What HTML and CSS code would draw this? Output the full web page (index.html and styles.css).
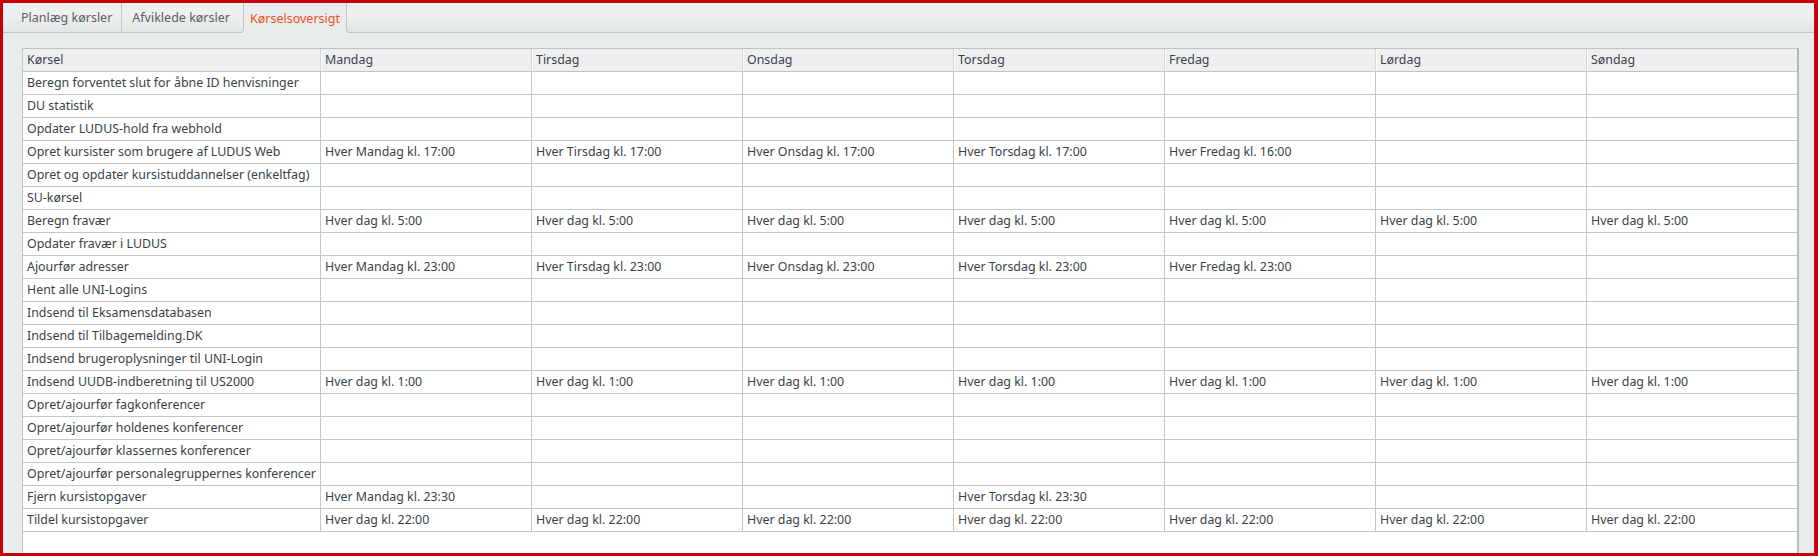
FILE: index.html
```html
<!DOCTYPE html>
<html lang="da">
<head>
<meta charset="utf-8">
<title>Kørselsoversigt</title>
<link rel="stylesheet" href="styles.css">
</head>
<body>
<div class="frame">
  <div class="tabs">
    <div class="tab tab-first">Planlæg kørsler</div>
    <div class="tab tab-before-active">Afviklede kørsler</div>
    <div class="tab tab-active">Kørselsoversigt</div>
    <div class="tab-filler"></div>
  </div>
  <div class="panel">
    <div class="grid">
      <table class="schedule">
        <colgroup>
          <col class="c-name">
          <col class="c-day"><col class="c-day"><col class="c-day"><col class="c-day"><col class="c-day"><col class="c-day">
          <col class="c-last">
        </colgroup>
        <thead>
          <tr><th>Kørsel</th><th>Mandag</th><th>Tirsdag</th><th>Onsdag</th><th>Torsdag</th><th>Fredag</th><th>Lørdag</th><th>Søndag</th></tr>
        </thead>
        <tbody>
          <tr><td>Beregn forventet slut for åbne ID henvisninger</td><td></td><td></td><td></td><td></td><td></td><td></td><td></td></tr>
          <tr><td>DU statistik</td><td></td><td></td><td></td><td></td><td></td><td></td><td></td></tr>
          <tr><td>Opdater LUDUS-hold fra webhold</td><td></td><td></td><td></td><td></td><td></td><td></td><td></td></tr>
          <tr><td>Opret kursister som brugere af LUDUS Web</td><td>Hver Mandag kl. 17:00</td><td>Hver Tirsdag kl. 17:00</td><td>Hver Onsdag kl. 17:00</td><td>Hver Torsdag kl. 17:00</td><td>Hver Fredag kl. 16:00</td><td></td><td></td></tr>
          <tr><td>Opret og opdater kursistuddannelser (enkeltfag)</td><td></td><td></td><td></td><td></td><td></td><td></td><td></td></tr>
          <tr><td>SU-kørsel</td><td></td><td></td><td></td><td></td><td></td><td></td><td></td></tr>
          <tr><td>Beregn fravær</td><td>Hver dag kl. 5:00</td><td>Hver dag kl. 5:00</td><td>Hver dag kl. 5:00</td><td>Hver dag kl. 5:00</td><td>Hver dag kl. 5:00</td><td>Hver dag kl. 5:00</td><td>Hver dag kl. 5:00</td></tr>
          <tr><td>Opdater fravær i LUDUS</td><td></td><td></td><td></td><td></td><td></td><td></td><td></td></tr>
          <tr><td>Ajourfør adresser</td><td>Hver Mandag kl. 23:00</td><td>Hver Tirsdag kl. 23:00</td><td>Hver Onsdag kl. 23:00</td><td>Hver Torsdag kl. 23:00</td><td>Hver Fredag kl. 23:00</td><td></td><td></td></tr>
          <tr><td>Hent alle UNI-Logins</td><td></td><td></td><td></td><td></td><td></td><td></td><td></td></tr>
          <tr><td>Indsend til Eksamensdatabasen</td><td></td><td></td><td></td><td></td><td></td><td></td><td></td></tr>
          <tr><td>Indsend til Tilbagemelding.DK</td><td></td><td></td><td></td><td></td><td></td><td></td><td></td></tr>
          <tr><td>Indsend brugeroplysninger til UNI-Login</td><td></td><td></td><td></td><td></td><td></td><td></td><td></td></tr>
          <tr><td>Indsend UUDB-indberetning til US2000</td><td>Hver dag kl. 1:00</td><td>Hver dag kl. 1:00</td><td>Hver dag kl. 1:00</td><td>Hver dag kl. 1:00</td><td>Hver dag kl. 1:00</td><td>Hver dag kl. 1:00</td><td>Hver dag kl. 1:00</td></tr>
          <tr><td>Opret/ajourfør fagkonferencer</td><td></td><td></td><td></td><td></td><td></td><td></td><td></td></tr>
          <tr><td>Opret/ajourfør holdenes konferencer</td><td></td><td></td><td></td><td></td><td></td><td></td><td></td></tr>
          <tr><td>Opret/ajourfør klassernes konferencer</td><td></td><td></td><td></td><td></td><td></td><td></td><td></td></tr>
          <tr><td>Opret/ajourfør personalegruppernes konferencer</td><td></td><td></td><td></td><td></td><td></td><td></td><td></td></tr>
          <tr><td>Fjern kursistopgaver</td><td>Hver Mandag kl. 23:30</td><td></td><td></td><td>Hver Torsdag kl. 23:30</td><td></td><td></td><td></td></tr>
          <tr><td>Tildel kursistopgaver</td><td>Hver dag kl. 22:00</td><td>Hver dag kl. 22:00</td><td>Hver dag kl. 22:00</td><td>Hver dag kl. 22:00</td><td>Hver dag kl. 22:00</td><td>Hver dag kl. 22:00</td><td>Hver dag kl. 22:00</td></tr>
        </tbody>
      </table>
    </div>
  </div>
</div>
</body>
</html>
```

FILE: styles.css
```css
html, body {
  margin: 0;
  padding: 0;
}

body {
  font-family: "Noto Sans", "DejaVu Sans", sans-serif;
  font-size: 12.4px;
  color: #3a3f46;
}

.frame {
  box-sizing: border-box;
  width: 1818px;
  height: 556px;
  border-style: solid;
  border-color: #c8000a;
  border-width: 3px 4px 3px 3px;
  background: #e9ecec;
  display: flex;
  flex-direction: column;
  overflow: hidden;
}

.tabs {
  display: flex;
  height: 29px;
  flex: none;
}

.tab {
  box-sizing: border-box;
  height: 30px;
  display: flex;
  align-items: center;
  font-size: 12.5px;
  color: #5a5f64;
  background: linear-gradient(#eef0f0 0, #eef0f0 40%, #e3e6e6 100%);
  border-bottom: 1px solid #bfc2c2;
  border-right: 1px solid #c3c6c6;
}

.tab-first {
  padding: 0 9px 0 18px;
}

.tab-before-active {
  padding: 0 13px 0 10px;
  border-bottom-right-radius: 4px;
}

.tab-active {
  padding: 0 6px 0 6px;
  color: #f0501e;
  background: #e9ecec;
  border: none;
}

.tab-filler {
  flex: 1;
  height: 30px;
  box-sizing: border-box;
  background: linear-gradient(#eef0f0 0, #eef0f0 40%, #e3e6e6 100%);
  border-left: 1px solid #c3c6c6;
  border-bottom: 1px solid #bfc2c2;
  border-bottom-left-radius: 4px;
}

.panel {
  flex: 1;
  display: flex;
  flex-direction: column;
  padding: 16px 15px 0 19px;
  min-height: 0;
}

.grid {
  flex: 1;
  background: #fff;
  border-top: 1px solid #bfc2c2;
  border-left: 1px solid #bfc2c2;
  border-right: 2px solid #b7baba;
}

.schedule {
  border-collapse: separate;
  border-spacing: 0;
  table-layout: fixed;
  width: 1774px;
}

.c-name { width: 298px; }
.c-day { width: 211px; }
.c-last { width: 210px; }

.schedule th,
.schedule td {
  box-sizing: border-box;
  height: 23px;
  padding: 0 4px;
  text-align: left;
  font-weight: normal;
  white-space: nowrap;
  overflow: hidden;
  border-bottom: 1px solid #c3c6c6;
  border-right: 1px solid #c3c6c6;
  line-height: 22px;
}

.schedule th {
  background: #eef0f0;
  border-bottom-color: #c0c3c3;
  border-right-color: #d4d7d7;
  box-shadow: inset 1px 0 0 #fafbfb;
  color: #3a4250;
}

.schedule th:first-child {
  box-shadow: none;
}

.schedule th:last-child,
.schedule td:last-child {
  border-right: none;
}
```
